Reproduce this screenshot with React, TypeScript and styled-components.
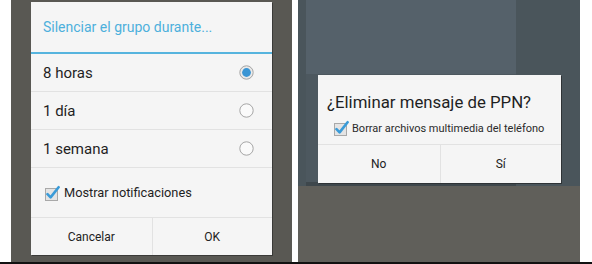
import styled, { createGlobalStyle } from 'styled-components';

const GlobalStyle = createGlobalStyle`
  html, body {
    margin: 0;
    padding: 0;
    background: #ffffff;
  }
  body {
    font-family: Roboto, 'Noto Sans', sans-serif;
  }
`;

function CheckIcon() {
  return (
    <svg width='16' height='16' viewBox='0 0 16 16'>
      <rect x='1.5' y='3.5' width='12' height='12' fill='#e4e4e4' stroke='#a9a9a9' />
      <path d='M3.5 9.2 L6.6 12.4 L14.6 2.2' fill='none' stroke='#3a9bd8' strokeWidth='2.6' strokeLinecap='round' strokeLinejoin='round' />
    </svg>
  );
}

function Radio({ checked }: { checked?: boolean }) {
  return (
    <svg width='15' height='15' viewBox='0 0 15 15'>
      <circle cx='7.5' cy='7.5' r='6.7' fill={checked ? '#e9e9e9' : '#fafafa'} stroke='#9c9c9c' strokeWidth='0.9' />
      {checked && <circle cx='7.5' cy='7.5' r='4.4' fill='#3a95d4' />}
    </svg>
  );
}

const options = [
  { label: '8 horas', checked: true },
  { label: '1 día' },
  { label: '1 semana' },
];

export default function App() {
  return (
    <>
      <GlobalStyle />
      <Screen>
        <Panels>
          <LeftPanel>
            <MuteDialog>
              <MuteTitle>Silenciar el grupo durante...</MuteTitle>
              {options.map((o) => (
                <OptionRow key={o.label}>
                  <span>{o.label}</span>
                  <Radio checked={o.checked} />
                </OptionRow>
              ))}
              <NotifyRow>
                <CheckIcon />
                <span>Mostrar notificaciones</span>
              </NotifyRow>
              <ButtonBar $height={37}>
                <DialogButton>Cancelar</DialogButton>
                <DialogButton>OK</DialogButton>
              </ButtonBar>
            </MuteDialog>
          </LeftPanel>
          <RightPanel>
            <ChatArea>
              <ChatBubble />
            </ChatArea>
            <BottomArea />
            <DeleteDialog>
              <DeleteTitle>¿Eliminar mensaje de PPN?</DeleteTitle>
              <DeleteCheck>
                <CheckIcon />
                <span>Borrar archivos multimedia del teléfono</span>
              </DeleteCheck>
              <ButtonBar $height={38}>
                <DialogButton>No</DialogButton>
                <DialogButton>Sí</DialogButton>
              </ButtonBar>
            </DeleteDialog>
          </RightPanel>
        </Panels>
        <BottomRule />
      </Screen>
    </>
  );
}

const Screen = styled.div`
  width: 592px;
  height: 264px;
  display: flex;
  flex-direction: column;
  overflow: hidden;
`;

const Panels = styled.div`
  height: 262px;
  display: flex;
  padding-left: 11px;
`;

const BottomRule = styled.div`
  height: 2px;
  background: #111111;
`;

const LeftPanel = styled.div`
  width: 261px;
  padding: 2px 0 0 20px;
  background: #595853;
`;

const MuteDialog = styled.div`
  width: 241px;
  height: 253px;
  background: #f5f5f5;
  display: flex;
  flex-direction: column;
  box-shadow: 1px 1px 0 #3a3a38;
`;

const MuteTitle = styled.div`
  height: 50px;
  display: flex;
  align-items: center;
  padding-left: 12px;
  font-size: 14px;
  color: #4db0dc;
  border-bottom: 2px solid #56b4de;
`;

const OptionRow = styled.div`
  height: 37px;
  display: flex;
  align-items: center;
  justify-content: space-between;
  padding: 0 18px 0 12px;
  font-size: 15px;
  color: #1f1f1f;
  border-bottom: 1px solid #e2e2e2;
`;

const NotifyRow = styled.div`
  height: 49px;
  display: flex;
  align-items: center;
  gap: 4px;
  padding-left: 13px;
  font-size: 12.8px;
  color: #1f1f1f;
  border-bottom: 1px solid #e2e2e2;
`;

const ButtonBar = styled.div<{ $height: number }>`
  height: ${(p) => p.$height}px;
  display: grid;
  grid-template-columns: 1fr 1fr;
`;

const DialogButton = styled.div`
  display: flex;
  align-items: center;
  justify-content: center;
  font-size: 12px;
  color: #222222;
  & + & {
    border-left: 1px solid #e2e2e2;
  }
`;

const RightPanel = styled.div`
  position: relative;
  width: 282px;
  margin-left: 6px;
  display: flex;
  flex-direction: column;
`;

const ChatArea = styled.div`
  height: 186px;
  background: #4a555b;
  padding-left: 8px;
`;

const ChatBubble = styled.div`
  width: 210px;
  height: 186px;
  background: linear-gradient(#55616a 0, #55616a 74px, #4d585f 74px, #4d585f 182px, #3e474c 182px);
`;

const BottomArea = styled.div`
  flex: 1;
  background: #605f5a;
`;

const DeleteDialog = styled.div`
  position: absolute;
  left: 20px;
  top: 75px;
  width: 243px;
  height: 108px;
  background: #f5f5f5;
  display: flex;
  flex-direction: column;
  box-shadow: 1px 1px 0 #2e3336;
`;

const DeleteTitle = styled.div`
  height: 37px;
  display: flex;
  align-items: flex-end;
  padding-left: 9px;
  font-size: 16.8px;
  color: #1f1f1f;
`;

const DeleteCheck = styled.div`
  height: 32px;
  display: flex;
  align-items: center;
  gap: 3px;
  padding-left: 15px;
  font-size: 11px;
  color: #2a2a2a;
  border-bottom: 1px solid #e2e2e2;
`;
